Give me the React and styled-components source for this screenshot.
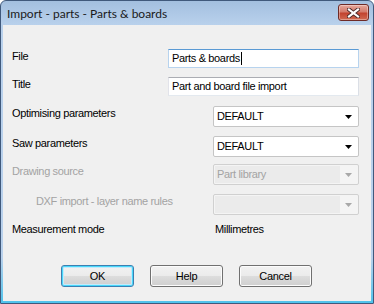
import styled, { createGlobalStyle } from "styled-components";

const GlobalStyle = createGlobalStyle`
  html, body {
    margin: 0;
    padding: 0;
    background: #ffffff;
  }
  * {
    box-sizing: border-box;
  }
`;

const Window = styled.div`
  width: 374px;
  height: 304px;
  display: flex;
  flex-direction: column;
  border: 1px solid #40597c;
  border-radius: 6px 6px 0 0;
  background: linear-gradient(#a3bfdf 0, #b9d1ec 24px, #b9d1ec 85%, #4fc3ec 100%);
  overflow: hidden;
`;

const TitleBar = styled.div`
  height: 24px;
  display: flex;
  align-items: center;
  justify-content: space-between;
  padding: 1px 4px 0 6px;
`;

const TitleText = styled.div`
  font-family: Lato, "Open Sans", sans-serif;
  font-size: 12px;
  color: #1a1a1a;
`;

const CloseButton = styled.div`
  width: 31px;
  height: 17px;
  margin-top: -2px;
  border: 1px solid #6e2a26;
  border-radius: 3px;
  background: linear-gradient(#e7a89c 0, #d37b6c 45%, #c2432f 55%, #d06a52 100%);
  box-shadow: inset 0 0 0 1px rgba(255, 255, 255, 0.35);
  display: flex;
  align-items: center;
  justify-content: center;
`;

const Body = styled.div`
  flex: 1;
  margin: 0 2px 2px 2px;
  background: #f0f0f0;
  display: flex;
  flex-direction: column;
`;

const Form = styled.div`
  display: grid;
  grid-template-columns: minmax(0, 1fr) auto;
  grid-template-rows: 28px 29px 30px 28px 30px 28px 20px;
  padding: 24px 12px 0 9px;
  font-family: "Liberation Sans", Arial, sans-serif;
  font-size: 11px;
  letter-spacing: -0.35px;
  & > :nth-child(even) {
    justify-self: end;
    align-self: start;
  }
`;

const Label = styled.div`
  line-height: 13px;
  padding-top: 1px;
  padding-left: ${(p) => (p.$indent ? "24px" : "0")};
  color: ${(p) => (p.$disabled ? "#a3a3a3" : "#000000")};
  white-space: nowrap;
`;

const TextBox = styled.div`
  width: 191px;
  height: 19px;
  background: #ffffff;
  border: 1px solid;
  border-color: ${(p) =>
    p.$focused ? "#5a9ad4 #b7d3ee #b7d3ee #b7d3ee" : "#abadb3 #dbdfe6 #e3e9ef #e2e3ea"};
  display: flex;
  align-items: center;
  padding-left: 3px;
  line-height: 13px;
  color: #000000;
`;

const Caret = styled.span`
  display: inline-block;
  width: 1px;
  height: 13px;
  background: #000000;
  margin-left: 1px;
`;

const Combo = styled.div`
  width: 146px;
  height: 21px;
  border: 1px solid ${(p) => (p.$disabled ? "#d0d0d0" : "#c5c5c5")};
  border-radius: 2px;
  background: ${(p) => (p.$disabled ? "#f4f4f4" : "#ffffff")};
  display: flex;
  align-items: center;
  padding: 1px;
`;

const ComboValue = styled.div`
  flex: 1;
  height: 100%;
  display: flex;
  align-items: center;
  padding-left: 2px;
  line-height: 13px;
  background: ${(p) => (p.$disabled ? "#ebebeb" : "transparent")};
  color: ${(p) => (p.$disabled ? "#a3a3a3" : "#000000")};
`;

const ComboArrow = styled.div`
  width: 17px;
  display: flex;
  justify-content: center;
  align-items: center;
`;

const Value = styled.div`
  width: 146px;
  padding-left: 2px;
  padding-top: 1px;
  line-height: 13px;
`;

const ButtonRow = styled.div`
  display: flex;
  justify-content: center;
  gap: 16px;
  margin-top: 23px;
  padding-right: 1px;
`;

const Button = styled.div`
  width: 73px;
  height: 22px;
  border: 1px solid ${(p) => (p.$default ? "#3c7fb1" : "#707070")};
  border-radius: 3px;
  background: linear-gradient(#f2f2f2 0, #ebebeb 50%, #dddddd 50%, #cfcfcf 100%);
  box-shadow: ${(p) =>
    p.$default ? "inset 0 0 0 1px #48d8fb, inset 0 0 0 2px #c4eafb" : "inset 0 0 0 1px #fcfcfc"};
  display: flex;
  align-items: center;
  justify-content: center;
  font-family: "Liberation Sans", Arial, sans-serif;
  font-size: 11px;
  letter-spacing: -0.3px;
  color: #000000;
`;

const CloseIcon = () => (
  <svg width="13" height="10" viewBox="0 0 13 10">
    <path d="M2 1.5 L11 8.5 M11 1.5 L2 8.5" stroke="#4a2a2a" strokeWidth="4" strokeLinecap="square" />
    <path d="M2 1.5 L11 8.5 M11 1.5 L2 8.5" stroke="#ffffff" strokeWidth="2.2" strokeLinecap="square" />
  </svg>
);

const DownArrow = ({ disabled }) => (
  <svg width="7" height="4" viewBox="0 0 7 4">
    <path d="M0 0 H7 L3.5 4 Z" fill={disabled ? "#a8a8a8" : "#000000"} />
  </svg>
);

const Select = ({ value, disabled }) => (
  <Combo $disabled={disabled}>
    <ComboValue $disabled={disabled}>{value}</ComboValue>
    <ComboArrow>
      <DownArrow disabled={disabled} />
    </ComboArrow>
  </Combo>
);

export default function App() {
  return (
    <>
      <GlobalStyle />
      <Window>
        <TitleBar>
          <TitleText>Import - parts - Parts &amp; boards</TitleText>
          <CloseButton>
            <CloseIcon />
          </CloseButton>
        </TitleBar>
        <Body>
          <Form>
            <Label>File</Label>
            <TextBox $focused>
              Parts &amp; boards
              <Caret />
            </TextBox>

            <Label>Title</Label>
            <TextBox>Part and board file import</TextBox>

            <Label>Optimising parameters</Label>
            <Select value="DEFAULT" />

            <Label>Saw parameters</Label>
            <Select value="DEFAULT" />

            <Label $disabled>Drawing source</Label>
            <Select value="Part library" disabled />

            <Label $disabled $indent>
              DXF import - layer name rules
            </Label>
            <Select value="" disabled />

            <Label>Measurement mode</Label>
            <Value>Millimetres</Value>
          </Form>
          <ButtonRow>
            <Button $default>OK</Button>
            <Button>Help</Button>
            <Button>Cancel</Button>
          </ButtonRow>
        </Body>
      </Window>
    </>
  );
}
